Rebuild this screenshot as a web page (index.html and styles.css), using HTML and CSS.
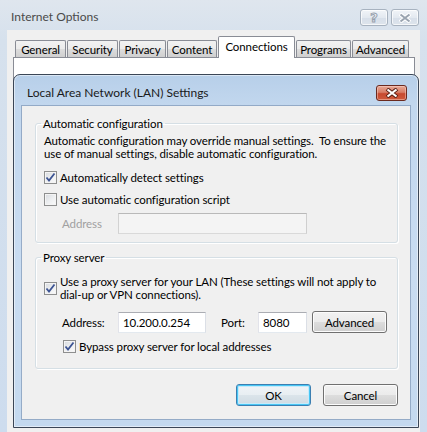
FILE: index.html
```html
<!DOCTYPE html>
<html lang="en">
<head>
  <meta charset="UTF-8" />
  <title>Internet Options</title>
  <link rel="stylesheet" href="styles.css">
</head>
<body>
  <div class="win">
    <div class="win-title">
      <span class="win-caption">Internet Options</span>
      <div class="win-btns">
        <span class="cap-btn cap-help">?</span>
        <span class="cap-btn cap-close">
          <svg width="12" height="10" viewBox="0 0 12 10"><path d="M1 1 L11 9 M11 1 L1 9" stroke="#fff" stroke-width="4"/><path d="M1.5 1.5 L10.5 8.5 M10.5 1.5 L1.5 8.5" stroke="#9aa4b0" stroke-width="2"/></svg>
        </span>
      </div>
    </div>
    <div class="win-client">
      <div class="tabs">
        <span class="tab tab-general">General</span>
        <span class="tab tab-security">Security</span>
        <span class="tab tab-privacy">Privacy</span>
        <span class="tab tab-content">Content</span>
        <span class="tab tab-connections active">Connections</span>
        <span class="tab tab-programs">Programs</span>
        <span class="tab tab-advanced">Advanced</span>
      </div>
      <div class="tab-panel"></div>
    </div>
  </div>

  <div class="dlg">
    <div class="dlg-title">
      <span class="dlg-caption">Local Area Network (LAN) Settings</span>
      <span class="dlg-close">
        <svg width="14" height="10" viewBox="0 0 14 10"><path d="M2 1 L12 9 M12 1 L2 9" stroke="#5a1f14" stroke-width="4"/><path d="M2.5 1.5 L11.5 8.5 M11.5 1.5 L2.5 8.5" stroke="#fff" stroke-width="2.2"/></svg>
      </span>
    </div>
    <div class="dlg-client">
      <fieldset class="group">
        <legend>Automatic configuration</legend>
        <p class="note">Automatic configuration may override manual settings.&nbsp; To ensure the<br>use of manual settings, disable automatic configuration.</p>
        <div class="check first">
          <span class="cb on"><svg width="11" height="11" viewBox="0 0 11 11"><path d="M1.5 5.5 L4 8.5 L9.5 1.5" fill="none" stroke="#3d5493" stroke-width="1.8"/></svg></span>
          <span>Automatically detect settings</span>
        </div>
        <div class="check">
          <span class="cb"></span>
          <span>Use automatic configuration script</span>
        </div>
        <div class="field field-auto">
          <span class="field-label disabled">Address</span>
          <span class="input input-wide disabled"></span>
        </div>
      </fieldset>

      <fieldset class="group group-proxy">
        <legend>Proxy server</legend>
        <div class="check multi">
          <span class="cb on"><svg width="11" height="11" viewBox="0 0 11 11"><path d="M1.5 5.5 L4 8.5 L9.5 1.5" fill="none" stroke="#3d5493" stroke-width="1.8"/></svg></span>
          <span>Use a proxy server for your LAN (These settings will not apply to<br>dial-up or VPN connections).</span>
        </div>
        <div class="field field-proxy">
          <span class="field-label">Address:</span>
          <span class="input input-addr">10.200.0.254</span>
          <span class="field-label port-label">Port:</span>
          <span class="input input-port">8080</span>
          <button class="btn btn-adv">Advanced</button>
        </div>
        <div class="check bypass">
          <span class="cb on"><svg width="11" height="11" viewBox="0 0 11 11"><path d="M1.5 5.5 L4 8.5 L9.5 1.5" fill="none" stroke="#3d5493" stroke-width="1.8"/></svg></span>
          <span>Bypass proxy server for local addresses</span>
        </div>
      </fieldset>

      <div class="actions">
        <button class="btn btn-default">OK</button>
        <button class="btn">Cancel</button>
      </div>
    </div>
  </div>
</body>
</html>
```

FILE: styles.css
```css
:root {
  --face: #f0f0f0;
  --tab-border: #898c95;
  --group-border: #d5dfe5;
  --ui-font: Lato, "Noto Sans", sans-serif;
}

* {
  box-sizing: border-box;
}

body {
  margin: 0;
  width: 427px;
  height: 432px;
  overflow: hidden;
  position: relative;
  font-family: var(--ui-font);
  font-size: 11.5px;
  letter-spacing: -0.1px;
  white-space: nowrap;
  color: #000;
  background: linear-gradient(180deg, #dfe6ee 0, #d6e1ed 40px, #cddcee 100%);
}

/* outer window */
.win {
  height: 100%;
  display: flex;
  flex-direction: column;
}

.win-title {
  height: 30px;
  display: flex;
  justify-content: space-between;
  align-items: flex-start;
  padding: 9px 8px 0 11px;
}

.win-caption {
  line-height: 16px;
  font-size: 12px;
  letter-spacing: 0;
  color: #4a4a4a;
}

.win-btns {
  display: flex;
  gap: 3px;
}

.cap-btn {
  width: 28px;
  height: 17px;
  border: 1px solid #a7b2bf;
  border-radius: 3px;
  background: linear-gradient(180deg, #f1f4f8 0, #e3e9f0 50%, #d7dfe9 51%, #dde4ec 100%);
  box-shadow: inset 0 0 0 1px rgba(255, 255, 255, 0.7);
  display: flex;
  align-items: center;
  justify-content: center;
}

.cap-help {
  font-family: "DejaVu Sans", sans-serif;
  font-weight: bold;
  font-size: 13px;
  color: #f4f6f9;
  -webkit-text-stroke: 1px #97a1ad;
  line-height: 1;
}

.win-client {
  flex: 1;
  margin: 0 7px;
  background: var(--face);
  padding-top: 6px;
}

.tabs {
  display: flex;
  align-items: flex-end;
  padding-left: 8px;
  height: 21px;
  position: relative;
  z-index: 1;
}

.tab {
  height: 17px;
  margin-right: 1px;
  border: 1px solid var(--tab-border);
  border-bottom: none;
  border-radius: 2px 2px 0 0;
  background: linear-gradient(180deg, #f2f2f2 0, #ebebeb 50%, #dddddd 51%, #cfcfcf 100%);
  display: flex;
  align-items: center;
  justify-content: center;
  line-height: 15px;
  padding-top: 1px;
}

.tab.active {
  height: 22px;
  margin-bottom: -1px;
  background: #fff;
  padding-bottom: 3px;
}

.tab-general { width: 51px; }
.tab-security { width: 51px; }
.tab-privacy { width: 47px; }
.tab-content { width: 50px; }
.tab-connections { width: 77px; }
.tab-programs { width: 55px; }
.tab-advanced { width: 57px; }

.tab-panel {
  margin: 0 5px 0 6px;
  height: 60px;
  background: #fff;
  border: 1px solid var(--tab-border);
}

/* LAN settings dialog */
.dlg {
  position: absolute;
  left: 13px;
  top: 74px;
  width: 406px;
  height: 354px;
  border: 1px solid #3b4656;
  border-radius: 7px 7px 0 0;
  background: linear-gradient(180deg, #b7cfe9 0, #c2d7ee 30px, #c9dcf1 200px, #c4d9ef 100%);
  box-shadow: inset 0 0 0 1px rgba(255, 255, 255, 0.5);
  display: flex;
  flex-direction: column;
}

.dlg-title {
  height: 31px;
  display: flex;
  justify-content: space-between;
  align-items: flex-start;
  padding: 10px 11px 0 13px;
}

.dlg-caption {
  line-height: 16px;
  font-size: 12px;
  letter-spacing: 0;
  color: #1a1a1a;
}

.dlg-close {
  width: 31px;
  height: 16px;
  border: 1px solid #6b2a1f;
  border-radius: 3px;
  background: linear-gradient(180deg, #e8a996 0, #d87d66 45%, #c7492f 55%, #cf5a3c 100%);
  box-shadow: inset 0 0 0 1px rgba(255, 220, 210, 0.45);
  display: flex;
  align-items: center;
  justify-content: center;
}

.dlg-client {
  flex: 1;
  margin: 0 8px 8px;
  background: var(--face);
  box-shadow: 0 0 0 1px rgba(90, 115, 150, 0.45);
  padding: 10px 12px 0 13px;
}

.group {
  margin: 0;
  padding: 0 8px 8px;
  border: 1px solid var(--group-border);
  border-radius: 3px;
  box-shadow: inset 1px 1px 0 #fff, 1px 1px 0 #fff;
  min-width: 0;
}

.group legend {
  padding: 0 2px;
  margin-left: -3px;
  line-height: 15px;
}

.group-proxy {
  margin-top: 7px;
  padding-bottom: 14px;
}

.note {
  margin: 3px 0 0;
  line-height: 13px;
}

.check {
  display: flex;
  align-items: center;
  gap: 3px;
  height: 15px;
  margin-top: 7px;
}

.check.first {
  margin-top: 10px;
}

.check.multi {
  height: 26px;
  line-height: 13px;
  margin-top: 10px;
}

.check.bypass {
  margin: 6px 0 0 19px;
}

.cb {
  flex: none;
  width: 13px;
  height: 13px;
  border: 1px solid #8e8f8f;
  background: linear-gradient(135deg, #d6d9de 0, #eceef0 50%, #fbfbfb 100%);
  box-shadow: inset 0 0 0 1px #f4f4f4;
  display: flex;
  align-items: center;
  justify-content: center;
}

.field {
  display: flex;
  align-items: center;
  height: 22px;
}

.field-auto {
  margin-top: 6px;
  height: 21px;
}

.field-proxy {
  margin-top: 10px;
}

.field-label {
  width: 56px;
  margin-left: 18px;
}

.field-label.disabled {
  color: #a0a0a0;
}

.port-label {
  width: 37px;
  margin-left: 15px;
}

.input {
  height: 21px;
  background: #fff;
  border: 1px solid;
  border-color: #abadb3 #dbdfe6 #e3e9ef #e2e3ea;
  padding: 0 4px;
  line-height: 19px;
}

.input.disabled {
  background: #f4f4f4;
  border-color: #b9b9b9 #cfcfcf #d9d9d9 #d2d2d2;
}

.input-wide { width: 189px; }
.input-addr { width: 88px; }
.input-port { width: 49px; }

.btn {
  width: 75px;
  height: 22px;
  padding: 0;
  font-family: var(--ui-font);
  font-size: 11.5px;
  letter-spacing: -0.1px;
  color: #000;
  border: 1px solid #707070;
  border-radius: 3px;
  background: linear-gradient(180deg, #f2f2f2 0, #ebebeb 50%, #dddddd 51%, #cfcfcf 100%);
  box-shadow: inset 0 0 0 1px #fcfcfc;
}

.btn-adv {
  margin-left: 5px;
}

.btn-default {
  border-color: #3c7fb1;
  background: linear-gradient(180deg, #f0f4f7 0, #e8eef2 50%, #dbe4ea 51%, #cfdbe3 100%);
  box-shadow: inset 0 0 0 1px #48c6f4, inset 0 0 0 2px #c6eafa;
}

.actions {
  display: flex;
  justify-content: flex-end;
  gap: 12px;
  margin-top: 15px;
}
```
